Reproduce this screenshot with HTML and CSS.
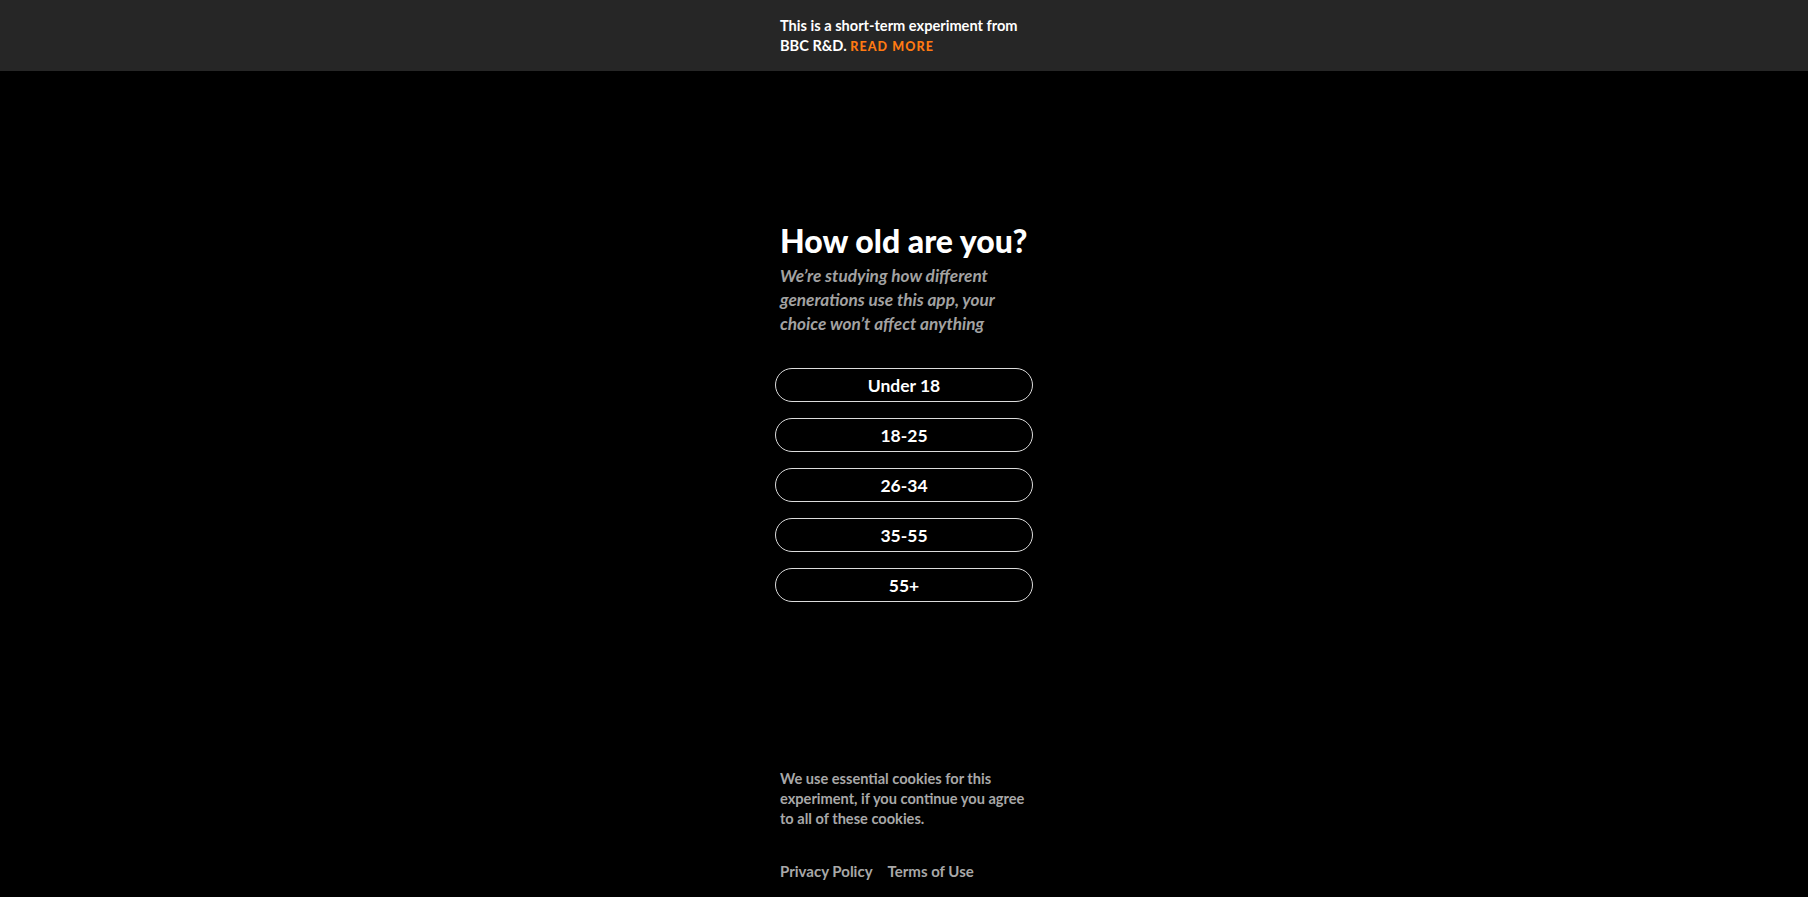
FILE: index.html
```html
<!DOCTYPE html>
<html lang="en">
<head>
<meta charset="utf-8">
<title>How old are you?</title>
<link rel="stylesheet" href="styles.css">
</head>
<body>
<div class="page">
  <header class="banner">
    <p class="banner-text">This is a short-term experiment from BBC R&amp;D. <a class="read-more" href="#">READ MORE</a></p>
  </header>
  <main class="main">
    <div class="panel">
      <h1 class="title">How old are you?</h1>
      <p class="subtitle">We’re studying how different generations use this app, your choice won’t affect anything</p>
      <div class="options">
        <button class="option">Under 18</button>
        <button class="option">18-25</button>
        <button class="option">26-34</button>
        <button class="option">35-55</button>
        <button class="option">55+</button>
      </div>
    </div>
  </main>
  <footer class="footer">
    <p class="cookie-text">We use essential cookies for this experiment, if you continue you agree to all of these cookies.</p>
    <nav class="footer-links">
      <a href="#">Privacy Policy</a>
      <a href="#">Terms of Use</a>
    </nav>
  </footer>
</div>
</body>
</html>
```

FILE: styles.css
```css
* { box-sizing: border-box; }
html, body { margin: 0; padding: 0; background: #000; }
body {
  font-family: Lato, "Liberation Sans", sans-serif;
  color: #fff;
}
.page {
  min-height: 100vh;
  display: flex;
  flex-direction: column;
}
.banner {
  background: #262626;
  height: 71px;
  display: flex;
  justify-content: center;
  padding-top: 16px;
}
.banner-text {
  width: 250px;
  margin: 0 0 0 2px;
  font-size: 14.6px;
  line-height: 20px;
  font-weight: 700;
  color: #fff;
}
.read-more {
  color: #ff7a12;
  text-decoration: none;
  font-weight: 900;
  letter-spacing: 1.1px;
  font-size: 12.5px;
  line-height: 16px;
}
.main {
  flex: 1;
  display: flex;
  justify-content: center;
  padding-top: 150px;
}
.panel {
  width: 258px;
  display: flex;
  flex-direction: column;
}
.title {
  margin: 0 5px;
  font-size: 32px;
  line-height: 40px;
  font-weight: 900;
}
.subtitle {
  margin: 3px 5px 0;
  font-size: 17.2px;
  line-height: 24px;
  font-style: italic;
  font-weight: 700;
  color: #a2a2a2;
}
.options {
  margin-top: 32px;
  display: flex;
  flex-direction: column;
  gap: 16px;
}
.option {
  height: 34px;
  border: 1px solid #dcdcdc;
  border-radius: 17px;
  background: #000;
  color: #fff;
  font-family: inherit;
  font-size: 17.5px;
  font-weight: 700;
  cursor: pointer;
}
.footer {
  display: flex;
  flex-direction: column;
  align-items: center;
  padding-bottom: 16px;
}
.cookie-text, .footer-links {
  width: 250px;
  margin-left: 2px;
}
.cookie-text {
  margin-top: 0;
  margin-bottom: 0;
  font-size: 14.6px;
  line-height: 20px;
  font-weight: 700;
  color: #a8a8a8;
}
.footer-links {
  margin-top: 32px;
  display: flex;
  gap: 15px;
}
.footer-links a {
  color: #a8a8a8;
  text-decoration: none;
  font-size: 15px;
  line-height: 20px;
  font-weight: 700;
}
```
